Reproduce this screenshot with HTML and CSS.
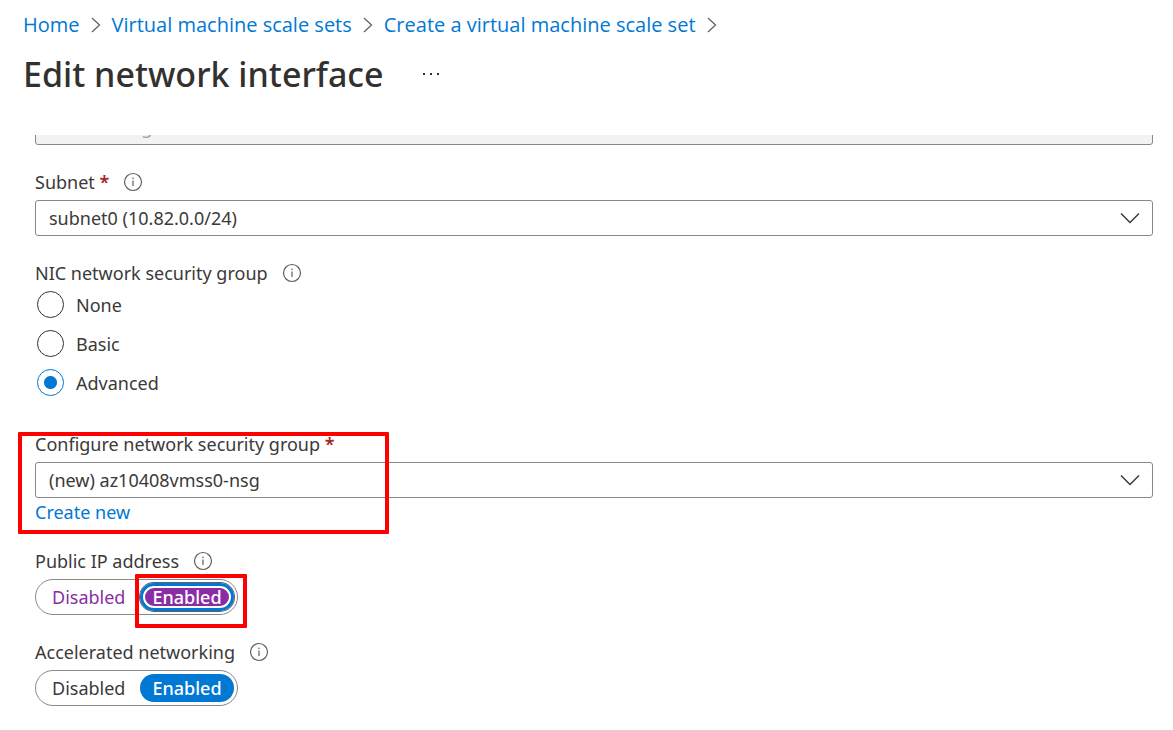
FILE: index.html
```
<!DOCTYPE html>
<html lang="en">

<head>
    <meta charset="UTF-8">
    <meta name="viewport" content="width=device-width, initial-scale=1.0">
    <title>Edit network interface</title>
    <link rel="stylesheet" href="styles.css">
</head>

<body>
    <svg class="sprite" aria-hidden="true">
        <symbol id="info" viewBox="0 0 20 20">
            <circle cx="10" cy="10" r="8.5" fill="none" stroke="currentColor" stroke-width="1.2"/>
            <path d="M10 8.5v5.5" stroke="currentColor" stroke-width="1.2"/>
            <circle cx="10" cy="6.3" r="0.8" fill="currentColor"/>
        </symbol>
        <symbol id="crumb" viewBox="0 0 10 16">
            <path d="M1 1l7.5 7L1 15" fill="none" stroke="currentColor" stroke-width="1.2"/>
        </symbol>
        <symbol id="down" viewBox="0 0 20 12">
            <path d="M1 1.5l9 9 9-9" fill="none" stroke="currentColor" stroke-width="1.5"/>
        </symbol>
    </svg>

    <header class="header">
        <nav class="breadcrumb" aria-label="Breadcrumb">
            <a href="#">Home</a>
            <svg class="crumb-icon"><use href="#crumb"/></svg>
            <a href="#">Virtual machine scale sets</a>
            <svg class="crumb-icon"><use href="#crumb"/></svg>
            <a href="#">Create a virtual machine scale set</a>
            <svg class="crumb-icon"><use href="#crumb"/></svg>
        </nav>
        <div class="title-row">
            <h1>Edit network interface</h1>
            <button class="more" type="button" aria-label="More">
                <svg width="18" height="4" viewBox="0 0 18 4" fill="currentColor">
                    <rect x="1" y="1" width="2" height="2"/>
                    <rect x="8" y="1" width="2" height="2"/>
                    <rect x="15" y="1" width="2" height="2"/>
                </svg>
            </button>
        </div>
    </header>

    <form class="form">
        <!-- virtual network, scrolled mostly out of view -->
        <div class="scrolled">
            <select class="select" aria-label="Virtual network" disabled>
                <option>az10408-vrg</option>
            </select>
        </div>

        <div class="field">
            <div class="label-row">
                <label for="subnet">Subnet <span class="required">*</span></label>
                <svg class="info"><use href="#info"/></svg>
            </div>
            <div class="dropdown">
                <select class="select" id="subnet">
                    <option>subnet0 (10.82.0.0/24)</option>
                </select>
                <svg class="arrow"><use href="#down"/></svg>
            </div>
        </div>

        <div class="field" role="radiogroup" aria-labelledby="nic-label">
            <div class="label-row">
                <span id="nic-label">NIC network security group</span>
                <svg class="info"><use href="#info"/></svg>
            </div>
            <div class="radios">
                <label class="radio"><input type="radio" name="nic">None</label>
                <label class="radio"><input type="radio" name="nic">Basic</label>
                <label class="radio"><input type="radio" name="nic" checked>Advanced</label>
            </div>
        </div>

        <div class="field marked">
            <div class="label-row">
                <label for="nsg">Configure network security group <span class="required">*</span></label>
            </div>
            <div class="dropdown">
                <select class="select" id="nsg">
                    <option>(new) az10408vmss0-nsg</option>
                </select>
                <svg class="arrow"><use href="#down"/></svg>
            </div>
            <a class="create" href="#">Create new</a>
        </div>

        <div class="field" role="radiogroup" aria-labelledby="ip-label">
            <div class="label-row">
                <span id="ip-label">Public IP address</span>
                <svg class="info"><use href="#info"/></svg>
            </div>
            <div class="toggle changed">
                <label class="option"><input type="radio" name="ip"><span>Disabled</span></label>
                <label class="option marked-option"><input type="radio" name="ip" checked><span>Enabled</span></label>
            </div>
        </div>

        <div class="field" role="radiogroup" aria-labelledby="accel-label">
            <div class="label-row">
                <span id="accel-label">Accelerated networking</span>
                <svg class="info"><use href="#info"/></svg>
            </div>
            <div class="toggle">
                <label class="option"><input type="radio" name="accel"><span>Disabled</span></label>
                <label class="option"><input type="radio" name="accel" checked><span>Enabled</span></label>
            </div>
        </div>
    </form>
</body>

</html>
```
FILE: styles.css
```
*,
*::after {
    box-sizing: border-box;
}

body {
    margin: 0;
    background-color: white;
    color: #3b3a39;
    font-family: "Noto Sans", "Open Sans", sans-serif;
    font-size: 18px;
    line-height: 24px;
}

a {
    color: #0078d4;
    text-decoration: none;
}

.sprite {
    display: none;
}

.header {
    padding: 13px 23px 0;
}

.breadcrumb {
    display: flex;
    align-items: center;
    gap: 11px;
    font-family: "Open Sans", "Noto Sans", sans-serif;
    font-size: 20px;
}

.crumb-icon {
    width: 10px;
    height: 16px;
    color: #605e5c;
}

.title-row {
    display: flex;
    align-items: center;
    gap: 38px;
    padding: 13px 0 37px;
}

h1 {
    margin: 0;
    color: #323130;
    font-size: 34px;
    font-weight: 500;
    line-height: 48px;
}

.more {
    display: flex;
    padding: 0;
    border: none;
    background: none;
    color: #323130;
}

.form {
    display: flex;
    flex-direction: column;
    gap: 25px;
    padding: 0 20px 24px 35px;
}

.scrolled {
    display: flex;
    align-items: flex-end;
    height: 10px;
    overflow: hidden;
}

.label-row {
    display: flex;
    align-items: center;
    gap: 14px;
    margin-bottom: 6px;
}

.required {
    color: #a4262c;
    font-weight: 600;
}

.info {
    width: 20px;
    height: 20px;
    color: #605e5c;
}

.dropdown {
    position: relative;
}

.select {
    display: block;
    flex-shrink: 0;
    width: 100%;
    height: 36px;
    padding: 0 44px 0 13px;
    border: 1px solid #8a8886;
    border-radius: 3px;
    background-color: white;
    color: #3b3a39;
    font: inherit;
    appearance: none;
}

.select:disabled {
    background-color: #f3f2f1;
    color: #a19f9d;
    opacity: 1;
}

.arrow {
    position: absolute;
    top: 12px;
    right: 13px;
    width: 20px;
    height: 12px;
    pointer-events: none;
}

.radios {
    margin-top: -6px;
    padding-bottom: 5px;
}

.radio {
    display: flex;
    align-items: center;
    gap: 12px;
    height: 39px;
    padding-left: 2px;
}

.radio input {
    width: 27px;
    height: 27px;
    margin: 0;
    border: 1px solid #323130;
    border-radius: 50%;
    appearance: none;
}

.radio input:checked {
    border-color: #0078d4;
    background: radial-gradient(circle, #0078d4 6px, transparent 7px);
}

.create {
    display: block;
    width: fit-content;
    margin-top: 2px;
}

.toggle {
    display: inline-flex;
    gap: 3px;
    height: 36px;
    padding: 3px 3px 3px 4px;
    border: 1px solid #8a8886;
    border-radius: 18px;
    vertical-align: top;
}

.option {
    position: relative;
}

.option input {
    position: absolute;
    margin: 0;
    opacity: 0;
}

.option span {
    display: block;
    padding: 0 12px;
    border-radius: 14px;
    line-height: 28px;
}

.option input:checked + span {
    background-color: #0078d4;
    color: white;
    font-weight: 500;
}

.changed .option span {
    color: #8a2da5;
}

.changed .option input:checked + span {
    background-color: #8a2da5;
    box-shadow: 0 0 0 1px #605e5c, inset 0 0 0 3px #0078d4, inset 0 0 0 5px white;
    color: white;
}

/* red frames around the settings to change */
.marked {
    position: relative;
}

.marked::after,
.marked-option::after {
    content: "";
    position: absolute;
    border: 4px solid red;
    border-radius: 1px;
    pointer-events: none;
}

.marked::after {
    top: 0;
    bottom: -10px;
    left: -17px;
    width: 371px;
}

.marked-option::after {
    inset: -9px -13px -17px -5px;
}
```
